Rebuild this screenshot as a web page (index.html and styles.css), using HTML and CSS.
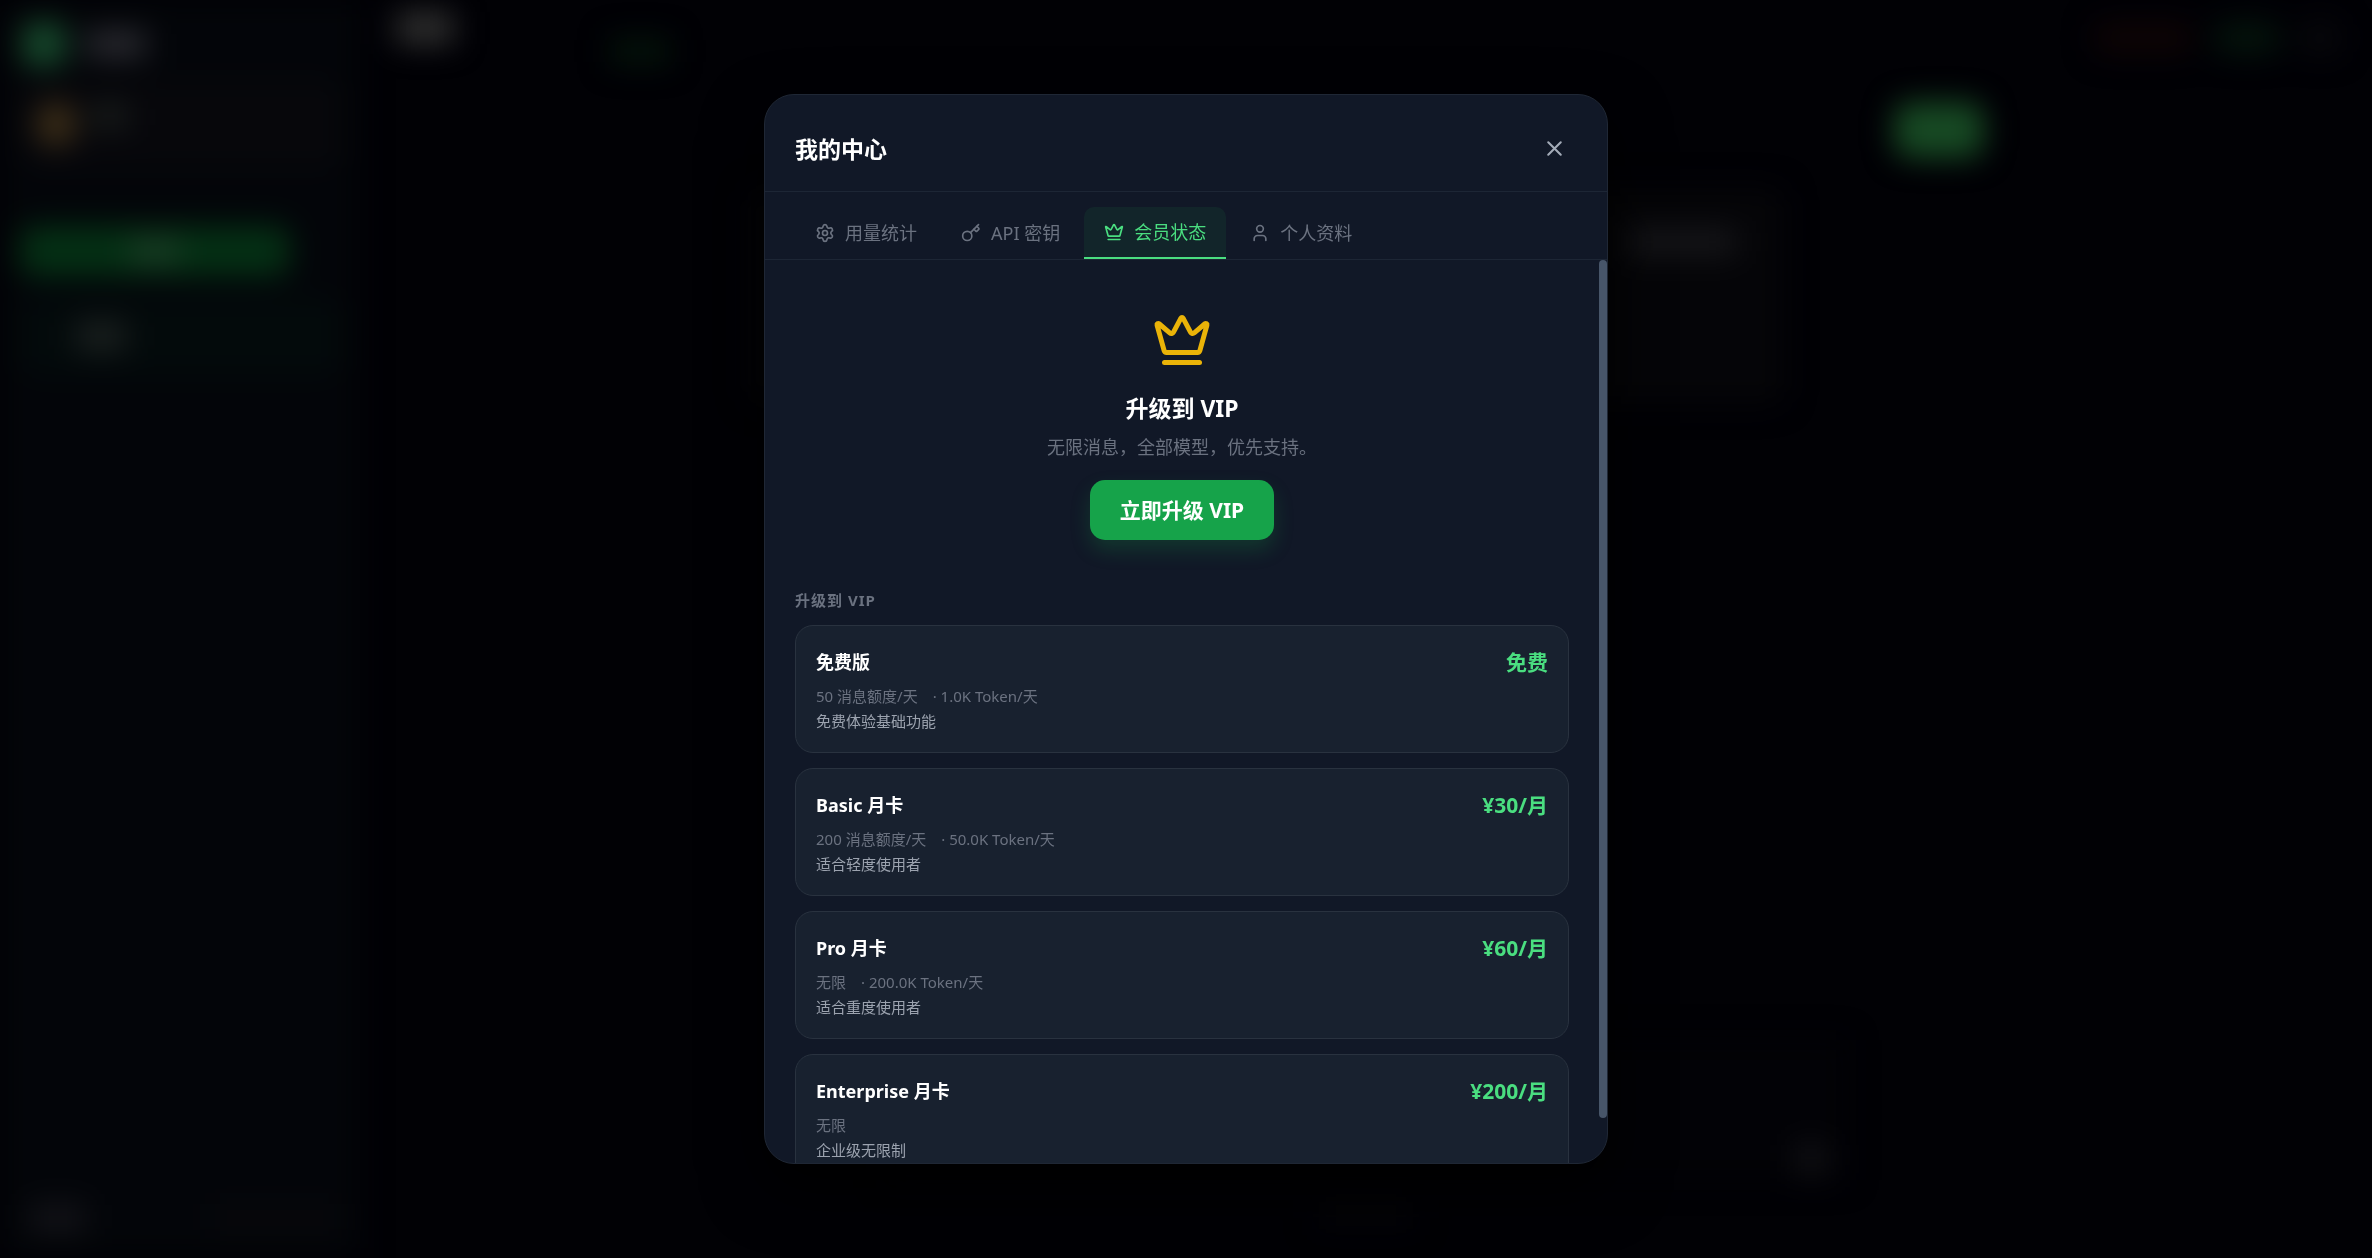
FILE: index.html
```html
<!DOCTYPE html>
<html lang="zh-CN">
<head>
<meta charset="utf-8">
<meta name="viewport" content="width=device-width, initial-scale=1">
<title>我的中心</title>
<link rel="stylesheet" href="styles.css">
</head>
<body>
<div class="app" aria-hidden="true">
  <aside class="sidebar">
    <div class="brand"><span class="brand-logo"></span><span class="brand-name"></span></div>
    <div class="account"><span class="avatar"></span><span class="account-name"></span></div>
    <div class="new-chat"><span class="new-chat-label"></span></div>
    <div class="chat-item"><span class="chat-title"></span></div>
    <div class="side-foot"><span class="foot-main"></span><span class="foot-extra"></span></div>
  </aside>
  <div class="main">
    <div class="topbar">
      <span class="page-name"></span><span class="model-pill"></span>
      <span class="pill pill-red"></span><span class="pill pill-green"></span><span class="pill pill-gray"></span>
    </div>
    <div class="thread">
      <div class="message-own"></div>
      <div class="message-reply"><span class="reply-line"></span></div>
    </div>
    <div class="composer"><span class="send"></span></div>
    <div class="note"></div>
  </div>
</div>

<div class="overlay">
  <section class="modal" role="dialog" aria-modal="true" aria-labelledby="modal-title">
    <header class="modal-head">
      <h1 class="modal-title" id="modal-title">我的中心</h1>
      <button class="close" type="button" aria-label="关闭">
        <svg class="icon-close" viewBox="0 0 24 24"><path d="M18 6 6 18M6 6l12 12"/></svg>
      </button>
    </header>
    <nav class="tabs" role="tablist">
      <button class="tab" type="button" role="tab" aria-selected="false">
        <svg class="icon" viewBox="0 0 24 24"><path d="M9.671 4.136a2.34 2.34 0 0 1 4.659 0 2.34 2.34 0 0 0 3.319 1.915 2.34 2.34 0 0 1 2.33 4.033 2.34 2.34 0 0 0 0 3.831 2.34 2.34 0 0 1-2.33 4.033 2.34 2.34 0 0 0-3.319 1.915 2.34 2.34 0 0 1-4.659 0 2.34 2.34 0 0 0-3.32-1.915 2.34 2.34 0 0 1-2.33-4.033 2.34 2.34 0 0 0 0-3.831A2.34 2.34 0 0 1 6.35 6.051a2.34 2.34 0 0 0 3.319-1.915"/><circle cx="12" cy="12" r="3"/></svg>
        用量统计
      </button>
      <button class="tab" type="button" role="tab" aria-selected="false">
        <svg class="icon" viewBox="0 0 24 24"><path d="m15.5 7.5 2.3 2.3a1 1 0 0 0 1.4 0l2.1-2.1a1 1 0 0 0 0-1.4L19 4"/><path d="m21 2-9.6 9.6"/><circle cx="7.5" cy="15.5" r="5.5"/></svg>
        API 密钥
      </button>
      <button class="tab tab-active" type="button" role="tab" aria-selected="true">
        <svg class="icon" viewBox="0 0 24 24"><path d="M11.562 3.266a.5.5 0 0 1 .876 0L15.39 8.87a1 1 0 0 0 1.516.294L21.183 5.5a.5.5 0 0 1 .798.519l-2.834 10.246a1 1 0 0 1-.956.734H5.81a1 1 0 0 1-.957-.734L2.02 6.02a.5.5 0 0 1 .798-.519l4.276 3.664a1 1 0 0 0 1.516-.294z"/><path d="M5 21h14"/></svg>
        会员状态
      </button>
      <button class="tab" type="button" role="tab" aria-selected="false">
        <svg class="icon" viewBox="0 0 24 24"><path d="M19 21v-2a4 4 0 0 0-4-4H9a4 4 0 0 0-4 4v2"/><circle cx="12" cy="7" r="4"/></svg>
        个人资料
      </button>
    </nav>
    <div class="modal-main">
      <div class="modal-body">
        <div class="hero">
          <svg class="icon-hero" viewBox="0 0 24 24"><path d="M11.562 3.266a.5.5 0 0 1 .876 0L15.39 8.87a1 1 0 0 0 1.516.294L21.183 5.5a.5.5 0 0 1 .798.519l-2.834 10.246a1 1 0 0 1-.956.734H5.81a1 1 0 0 1-.957-.734L2.02 6.02a.5.5 0 0 1 .798-.519l4.276 3.664a1 1 0 0 0 1.516-.294z"/><path d="M5 21h14"/></svg>
          <h2 class="hero-title">升级到 VIP</h2>
          <p class="hero-text">无限消息，全部模型，优先支持。</p>
          <button class="upgrade" type="button">立即升级 VIP</button>
        </div>
        <h3 class="section-label">升级到 VIP</h3>
        <div class="plans">
          <article class="plan">
            <div class="plan-top"><h4 class="plan-name">免费版</h4><span class="plan-price">免费</span></div>
            <p class="plan-quota"><span>50 消息额度/天</span><span>· 1.0K Token/天</span></p>
            <p class="plan-text">免费体验基础功能</p>
          </article>
          <article class="plan">
            <div class="plan-top"><h4 class="plan-name">Basic 月卡</h4><span class="plan-price">¥30/月</span></div>
            <p class="plan-quota"><span>200 消息额度/天</span><span>· 50.0K Token/天</span></p>
            <p class="plan-text">适合轻度使用者</p>
          </article>
          <article class="plan">
            <div class="plan-top"><h4 class="plan-name">Pro 月卡</h4><span class="plan-price">¥60/月</span></div>
            <p class="plan-quota"><span>无限</span><span>· 200.0K Token/天</span></p>
            <p class="plan-text">适合重度使用者</p>
          </article>
          <article class="plan">
            <div class="plan-top"><h4 class="plan-name">Enterprise 月卡</h4><span class="plan-price">¥200/月</span></div>
            <p class="plan-quota"><span>无限</span></p>
            <p class="plan-text">企业级无限制</p>
          </article>
        </div>
      </div>
      <div class="scrollbar" aria-hidden="true"><div class="scroll-thumb"></div></div>
    </div>
  </section>
</div>
</body>
</html>
```
FILE: styles.css
```css
* { box-sizing: border-box; }

body {
  margin: 0;
  height: 100vh;
  overflow: hidden;
  background: #010105;
  color: #fff;
  font-family: "Noto Sans", "Noto Sans CJK SC", sans-serif;
}

h1, h2, h3, h4, p { margin: 0; }

button {
  border: 0;
  background: none;
  font-family: inherit;
  cursor: pointer;
}

svg {
  fill: none;
  stroke: currentColor;
  stroke-width: 2;
  stroke-linecap: round;
  stroke-linejoin: round;
  flex: none;
}

/* Dimmed application behind the dialog */
.app {
  display: flex;
  height: 100vh;
  filter: blur(15px);
}

.sidebar {
  width: 360px;
  flex: none;
  display: flex;
  flex-direction: column;
  padding: 20px;
  background: #030509;
}

.brand {
  display: flex;
  align-items: center;
  gap: 20px;
  padding: 0 2px;
  height: 48px;
}
.brand-logo { width: 44px; height: 44px; border-radius: 12px; background: #164a2c; }
.brand-name { width: 60px; height: 26px; background: #2c2c32; }

.account {
  display: flex;
  align-items: center;
  gap: 16px;
  height: 88px;
  margin-top: 12px;
  padding: 0 16px;
  border-radius: 16px;
  background: #07070b;
}
.avatar { width: 40px; height: 44px; border-radius: 20px; background: #3e2f18; }
.account-name { width: 36px; height: 24px; margin-bottom: 16px; background: #1a1e1c; }

.new-chat {
  display: flex;
  align-items: center;
  justify-content: center;
  width: 270px;
  height: 50px;
  margin-top: 58px;
  border-radius: 14px;
  background: #043014;
}
.new-chat-label { width: 50px; height: 20px; background: #1e3f28; }

.chat-item {
  display: flex;
  align-items: center;
  height: 76px;
  margin-top: 22px;
  padding: 0 56px;
  border-radius: 14px;
  background: #030a0b;
}
.chat-title { width: 50px; height: 28px; background: #1c2120; }

.side-foot {
  display: flex;
  align-items: center;
  justify-content: space-between;
  margin-top: auto;
  height: 40px;
}
.foot-main { width: 56px; height: 28px; margin-left: 10px; background: #131318; }
.foot-extra { width: 130px; height: 30px; background: #07070b; }

.main {
  flex: 1;
  display: flex;
  flex-direction: column;
}
.topbar {
  display: flex;
  align-items: center;
  gap: 20px;
  height: 76px;
  padding: 0 32px 0 36px;
}
.page-name { width: 58px; height: 32px; margin-bottom: 20px; background: #303030; }
.model-pill { width: 60px; height: 26px; margin: 26px auto 0 136px; background: #04140a; }
.pill { height: 32px; border-radius: 12px; }
.pill-red { width: 100px; background: #0e0405; }
.pill-green { width: 66px; background: #04140c; }
.pill-gray { width: 40px; background: #08080c; }

.thread {
  flex: 1;
  display: flex;
  flex-direction: column;
  width: 1236px;
  max-width: 100%;
  margin: 0 auto;
}
.message-own {
  align-self: flex-end;
  width: 90px;
  height: 56px;
  margin-top: 26px;
  border-radius: 16px;
  background: #174a24;
}
.message-reply {
  width: 1036px;
  height: 216px;
  margin-top: 30px;
  padding: 42px 48px;
  border-radius: 16px;
  background: #050508;
}
.reply-line { display: block; width: 110px; height: 24px; margin-left: auto; background: #18181b; }

.composer {
  display: flex;
  align-items: flex-end;
  justify-content: flex-end;
  width: 960px;
  max-width: 100%;
  height: 140px;
  margin: 0 auto;
  padding: 6px 20px;
  background: #020206;
}
.send { width: 30px; height: 30px; background: #121216; }
.note { width: 100px; height: 20px; margin: 26px auto 32px; background: #060609; }

/* Dialog */
.overlay {
  position: fixed;
  inset: 0;
  display: flex;
  align-items: center;
  justify-content: center;
}
.modal {
  display: flex;
  flex-direction: column;
  width: 100%;
  max-width: 844px;
  height: 85vh;
  overflow: hidden;
  border: 1px solid #1f2735;
  border-radius: 30px;
  background: #111827;
  box-shadow: 0 24px 60px #000;
}
.modal-head {
  display: flex;
  align-items: center;
  justify-content: space-between;
  flex: none;
  padding: 31px 30px 20px;
  border-bottom: 1px solid #1d2635;
}
.modal-title { font-size: 23px; line-height: 30px; }
.close { display: flex; padding: 10px; color: #a3abb8; }
.icon-close { width: 25px; height: 25px; }

.tabs {
  display: flex;
  flex: none;
  gap: 4px;
  padding: 15px 30px 0;
  border-bottom: 1px solid #1d2635;
}
.tab {
  display: flex;
  align-items: center;
  gap: 10px;
  height: 52px;
  padding: 0 20px;
  border-radius: 10px 10px 0 0;
  color: #6b7280;
  font-size: 18px;
  line-height: 26px;
}
.tab-active {
  border-bottom: 2px solid #4ade80;
  background: rgba(34, 197, 94, 0.08);
  color: #4ade80;
}
.icon { width: 20px; height: 20px; }

.modal-main {
  flex: 1;
  display: flex;
  min-height: 0;
}
.modal-body {
  flex: 1;
  min-width: 0;
  overflow-y: auto;
  padding: 30px;
  scrollbar-width: none;
}
.scrollbar { flex: none; width: 8px; }
.scroll-thumb { height: 95%; border-radius: 4px; background: #475569; }

.hero {
  display: flex;
  flex-direction: column;
  align-items: center;
  padding: 20px 0;
}
.icon-hero { width: 60px; height: 60px; color: #eab308; }
.hero-title { margin-top: 20px; font-size: 23px; line-height: 36px; }
.hero-text { margin-top: 8px; color: #6b7280; font-size: 18px; line-height: 26px; }
.upgrade {
  height: 60px;
  margin-top: 20px;
  padding: 0 30px;
  border-radius: 15px;
  background: #16a34a;
  box-shadow: 0 10px 20px rgba(22, 163, 74, 0.22);
  color: #fff;
  font-size: 21px;
  font-weight: 700;
  line-height: 30px;
}

.section-label {
  margin-top: 30px;
  color: #6b7280;
  font-size: 15px;
  line-height: 20px;
  letter-spacing: 1px;
}
.plans {
  display: flex;
  flex-direction: column;
  gap: 15px;
  margin-top: 15px;
}
.plan {
  padding: 20px 20px 18px;
  border: 1px solid #29323f;
  border-radius: 18px;
  background: #18212f;
}
.plan-top {
  display: flex;
  align-items: center;
  justify-content: space-between;
  margin-bottom: 6px;
  line-height: 32px;
}
.plan-name { font-size: 18px; }
.plan-price { color: #4ade80; font-size: 21px; font-weight: 700; }
.plan-quota,
.plan-text {
  font-size: 15px;
  line-height: 25px;
}
.plan-quota { display: flex; gap: 15px; color: #6b7280; }
.plan-text { color: #9ca3af; }
```
